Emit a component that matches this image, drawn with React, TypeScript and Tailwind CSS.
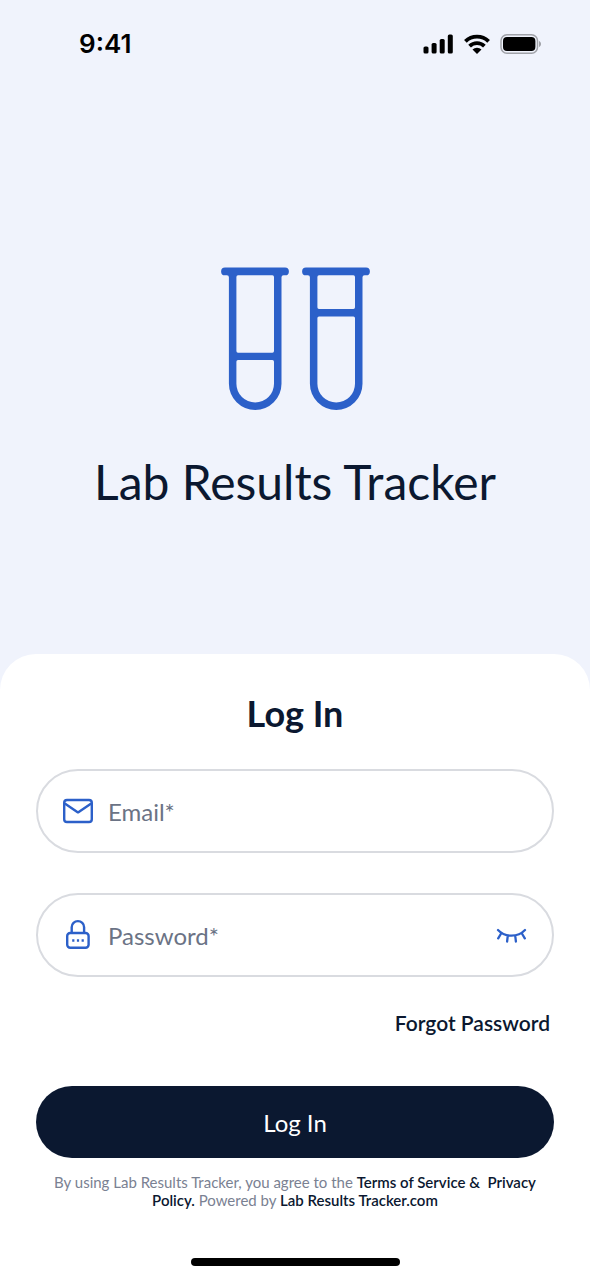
import { useState } from "react";

const StatusBar = () => (
  <header className="flex h-22 items-center justify-between pr-12 pl-[79px]">
    <span className="font-['Inter',sans-serif] text-[26px] leading-8 font-semibold text-black">9:41</span>
    <div className="flex items-center gap-[10px]">
      <svg width="31" height="20" viewBox="0 0 31 20" aria-hidden="true">
        <rect x="0.5" y="12.5" width="5" height="7" rx="1.6" />
        <rect x="8.6" y="9" width="5" height="10.5" rx="1.6" />
        <rect x="16.7" y="5" width="5" height="14.5" rx="1.6" />
        <rect x="24.8" y="0.5" width="5" height="19" rx="1.6" />
      </svg>
      <svg width="26" height="20" viewBox="0 0 26 20" aria-hidden="true">
        <path d="M1.4 7.3a16.5 16.5 0 0 1 23.2 0M5.6 12.2a10.6 10.6 0 0 1 14.8 0" fill="none" stroke="#000" strokeWidth="3.8" />
        <path d="M8.5 15.5a6.6 6.6 0 0 1 9 0L13 20z" />
      </svg>
      <svg width="42" height="20" viewBox="0 0 42 20" aria-hidden="true">
        <rect x="1" y="0.8" width="36.5" height="18.4" rx="6" fill="none" stroke="#a0a2a8" strokeWidth="1.5" />
        <rect x="3" y="2.9" width="32.4" height="14.2" rx="4" />
        <path d="M39 7v6c1.3-.5 2-1.7 2-3s-.7-2.5-2-3z" fill="#a0a2a8" />
      </svg>
    </div>
  </header>
);

const Logo = () => (
  <svg width="149" height="144" viewBox="0 0 149 144" fill="#2c60c9" fillRule="evenodd" aria-hidden="true">
    <path d="M4 .5h60a3.8 3.8 0 0 1 0 7.8h-1.5q-2 0-2 2v106.400a26.300 26.300 0 0 1-52.600 0V10.300q0-2-2-2H4a3.800 3.800 0 0 1 0-7.800zM17 8.300q-1.600 0-1.600 1.600v74.200q0 1.600 1.600 1.600h34.400q1.600 0 1.600-1.600V9.900q0-1.600-1.600-1.600zM17 93.100q-1.600 0-1.600 1.600v22a18.800 18.800 0 0 0 37.600 0v-22q0-1.600-1.600-1.600z" />
    <path d="M85 .5h60a3.8 3.8 0 0 1 0 7.8h-1.5q-2 0-2 2v106.400a26.300 26.300 0 0 1-52.600 0V10.300q0-2-2-2H85a3.800 3.800 0 0 1 0-7.800zM98 8.300q-1.600 0-1.600 1.600v30.400q0 1.600 1.600 1.600h34.400q1.600 0 1.600-1.600V9.900q0-1.600-1.600-1.600zM98 49.400q-1.600 0-1.600 1.600v65.700a18.800 18.800 0 0 0 37.600 0V51q0-1.600-1.600-1.600z" />
  </svg>
);

const MailIcon = () => (
  <svg width="32" height="32" viewBox="0 0 32 32" fill="none" stroke="#2c60c9" strokeWidth="2.4" strokeLinejoin="round" aria-hidden="true">
    <rect x="2.2" y="5" width="27.6" height="22" rx="2.8" />
    <path d="M2.8 8.400 16 17.400l13.200-9" />
  </svg>
);

const LockIcon = () => (
  <svg width="32" height="32" viewBox="0 0 32 32" fill="none" stroke="#2c60c9" strokeWidth="2.4" aria-hidden="true">
    <rect x="5.2" y="14" width="21.4" height="14.8" rx="3" />
    <path d="M9.7 14V8.300a6.200 6.200 0 0 1 12.400 0V14" />
    <path d="M10.200 21.500h2.200M14.900 21.500h2.200M19.600 21.500h2.200" />
  </svg>
);

const ClosedEyeIcon = () => (
  <svg width="32" height="32" viewBox="0 0 32 32" fill="none" stroke="#2c60c9" strokeWidth="2.3" strokeLinecap="round" aria-hidden="true">
    <path d="M2 11c7 7.500 20 7.500 27 0M5.400 14l-3.200 5.300M25.600 14l3.200 5.300M11.700 17.300l-.6 5.200M19.300 17.300l.6 5.200" />
  </svg>
);

const fieldClass = "flex h-21 items-center rounded-full border-2 border-[#d9dbe0] px-6";
const inputClass = "ml-3.5 h-10 min-w-0 flex-1 bg-transparent text-2xl text-[#0b1830] outline-none placeholder:text-[#6b7385]";

const App = () => {
  const [showPassword, setShowPassword] = useState(false);

  return (
    <div className="flex min-h-screen flex-col bg-[#f0f3fc] font-['Lato',sans-serif] text-[#0b1830]">
      <StatusBar />

      <section className="flex flex-1 flex-col items-center px-6 pt-[179px] pb-[141px]">
        <Logo />
        <h1 className="mt-10 text-center text-5xl leading-[62px]">Lab Results Tracker</h1>
      </section>

      <main className="rounded-t-[36px] bg-white px-9 pt-9 pb-3">
        <h2 className="text-center text-4xl leading-[46px] font-bold">Log In</h2>

        <form className="mt-[33px] flex flex-col" onSubmit={(e) => e.preventDefault()}>
          <div className={fieldClass}>
            <label htmlFor="email" aria-label="Email">
              <MailIcon />
            </label>
            <input id="email" type="email" aria-label="Email" placeholder="Email*" className={inputClass} />
          </div>

          <div className={`${fieldClass} mt-10`}>
            <label htmlFor="password" aria-label="Password">
              <LockIcon />
            </label>
            <input
              id="password"
              type={showPassword ? "text" : "password"}
              aria-label="Password"
              placeholder="Password*"
              className={inputClass}
            />
            <button type="button" aria-label="Show password" onClick={() => setShowPassword(!showPassword)}>
              <ClosedEyeIcon />
            </button>
          </div>

          <a href="#forgot" className="mt-8 mr-1 self-end text-[21px] leading-7 font-semibold">Forgot Password</a>

          <button type="submit" className="mt-[49px] h-18 rounded-full bg-[#0b1830] pt-0.5 text-2xl text-white">Log In</button>
        </form>

        <p className="mt-[15px] text-center text-[15px] leading-[18px] text-[#7a8192]">
          By using Lab Results Tracker, you agree to the{" "}
          <a href="#terms" className="font-semibold text-[#0b1830]">Terms of Service</a>
          <span className="font-semibold text-[#0b1830]"> &amp;&nbsp; </span>
          <a href="#privacy" className="font-semibold text-[#0b1830]">Privacy Policy.</a>
          {" "}Powered by{" "}
          <a href="#home" className="font-semibold text-[#0b1830]">Lab Results Tracker.com</a>
        </p>

        <div className="mx-auto mt-[49px] h-2 w-[209px] rounded-full bg-black" />
      </main>
    </div>
  );
};

export default App;
